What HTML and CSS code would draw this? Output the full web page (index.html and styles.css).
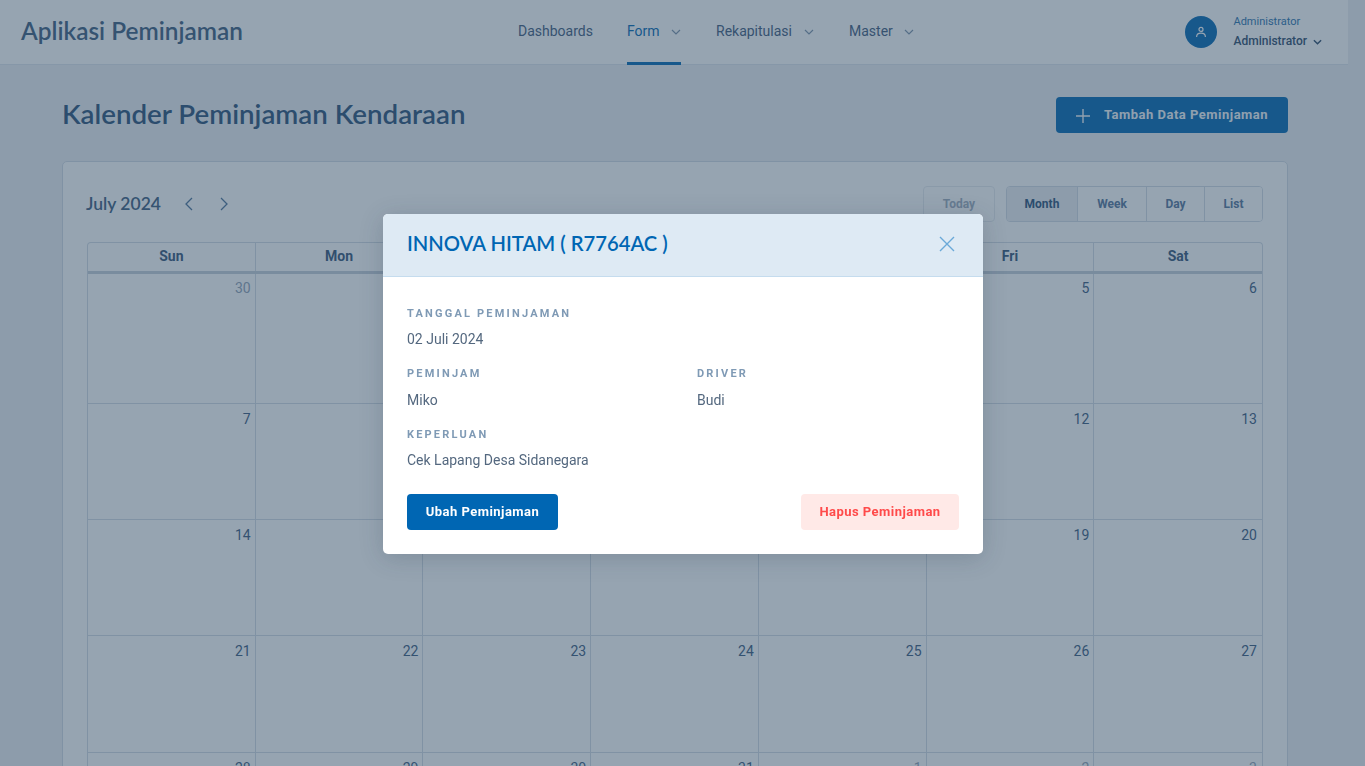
FILE: index.html
```html
<!DOCTYPE html>
<html lang="en">
  <head>
    <meta charset="UTF-8" />
    <meta name="viewport" content="width=device-width, initial-scale=1.0" />
    <title>Kalender Peminjaman Kendaraan</title>
    <link rel="stylesheet" href="styles.css">
  </head>
  <body>
    <div class="page">
      <header class="topbar">
        <div class="brand">Aplikasi Peminjaman</div>
        <nav class="nav">
          <a class="nav-item">Dashboards</a>
          <a class="nav-item active">Form
            <svg class="caret" viewBox="0 0 10 6"><path d="M1 1l4 4 4-4" /></svg>
          </a>
          <a class="nav-item">Rekapitulasi
            <svg class="caret" viewBox="0 0 10 6"><path d="M1 1l4 4 4-4" /></svg>
          </a>
          <a class="nav-item">Master
            <svg class="caret" viewBox="0 0 10 6"><path d="M1 1l4 4 4-4" /></svg>
          </a>
        </nav>
        <div class="user">
          <div class="avatar">
            <svg viewBox="0 0 12 12"><circle cx="6" cy="3.4" r="2" /><path d="M1.6 11c0-2.6 2-3.8 4.4-3.8s4.4 1.2 4.4 3.8" /></svg>
          </div>
          <div class="user-text">
            <div class="user-role">Administrator</div>
            <div class="user-name">Administrator
              <svg class="user-caret" viewBox="0 0 10 6"><path d="M1 1l4 4 4-4" /></svg>
            </div>
          </div>
        </div>
      </header>

      <main class="content">
        <div class="page-head">
          <h1>Kalender Peminjaman Kendaraan</h1>
          <button class="btn-add">
            <svg viewBox="0 0 16 16"><path d="M8 1v14M1 8h14" /></svg>
            <span>Tambah Data Peminjaman</span>
          </button>
        </div>

        <section class="card">
          <div class="toolbar">
            <div class="month-nav">
              <h2>July 2024</h2>
              <svg class="arrow" viewBox="0 0 8 14"><path d="M7 1L1 7l6 6" /></svg>
              <svg class="arrow" viewBox="0 0 8 14"><path d="M1 1l6 6-6 6" /></svg>
            </div>
            <div class="views">
              <button class="btn-today">Today</button>
              <div class="view-group">
                <button class="view active">Month</button>
                <button class="view week">Week</button>
                <button class="view day">Day</button>
                <button class="view list">List</button>
              </div>
            </div>
          </div>

          <div class="calendar">
            <div class="cal-head">
              <div>Sun</div><div>Mon</div><div>Tue</div><div>Wed</div><div>Thu</div><div>Fri</div><div>Sat</div>
            </div>
            <div class="cal-week first">
              <div class="other">30</div><div>1</div><div>2</div><div>3</div><div>4</div><div>5</div><div>6</div>
            </div>
            <div class="cal-week">
              <div>7</div><div>8</div><div>9</div><div>10</div><div>11</div><div>12</div><div>13</div>
            </div>
            <div class="cal-week">
              <div>14</div><div>15</div><div>16</div><div>17</div><div>18</div><div>19</div><div>20</div>
            </div>
            <div class="cal-week">
              <div>21</div><div>22</div><div>23</div><div>24</div><div>25</div><div>26</div><div>27</div>
            </div>
            <div class="cal-week">
              <div>28</div><div>29</div><div>30</div><div>31</div><div class="other">1</div><div class="other">2</div><div class="other">3</div>
            </div>
          </div>
        </section>
      </main>
    </div>

    <div class="overlay">
      <div class="modal">
        <div class="modal-head">
          <h3>INNOVA HITAM ( R7764AC )</h3>
          <svg class="close" viewBox="0 0 16 16"><path d="M1 1l14 14M15 1L1 15" /></svg>
        </div>
        <div class="modal-body">
          <div class="info-grid">
            <div class="info wide">
              <div class="info-label">TANGGAL PEMINJAMAN</div>
              <div class="info-value">02 Juli 2024</div>
            </div>
            <div class="info">
              <div class="info-label">PEMINJAM</div>
              <div class="info-value">Miko</div>
            </div>
            <div class="info">
              <div class="info-label">DRIVER</div>
              <div class="info-value">Budi</div>
            </div>
            <div class="info wide">
              <div class="info-label">KEPERLUAN</div>
              <div class="info-value">Cek Lapang Desa Sidanegara</div>
            </div>
          </div>
          <div class="modal-actions">
            <button class="btn-edit">Ubah Peminjaman</button>
            <button class="btn-delete">Hapus Peminjaman</button>
          </div>
        </div>
      </div>
    </div>
  </body>
</html>
```

FILE: styles.css
```css
* {
  box-sizing: border-box;
}

html,
body {
  height: 100%;
}

body {
  margin: 0;
  height: 766px;
  overflow: hidden;
  background-color: #edeff3;
  font-family: Roboto, "Liberation Sans", sans-serif;
  color: #2c4a6b;
}

button {
  font-family: inherit;
  border: none;
  cursor: pointer;
}

.page {
  width: 1348px;
}

/* top bar */
.topbar {
  height: 65px;
  padding: 0 26px 0 21px;
  display: flex;
  align-items: center;
  justify-content: space-between;
  background-color: #fff;
  border-bottom: 1px solid #dfe5ec;
  position: relative;
}

.brand {
  margin-bottom: 4px;
  font-family: Lato, "Noto Sans", sans-serif;
  font-size: 24.4px;
  font-weight: 600;
  color: #3c5c7e;
}

.nav {
  position: absolute;
  left: 518px;
  top: 0;
  height: 65px;
  display: grid;
  grid-template-columns: 74px 54px 98px 65px;
  column-gap: 35px;
}

.nav-item {
  height: 65px;
  display: flex;
  align-items: center;
  justify-content: space-between;
  padding-bottom: 3px;
  font-size: 14px;
  color: #3f5a7d;
}

.nav-item.active {
  color: #0066b3;
  border-bottom: 3px solid #0066b3;
  padding-bottom: 0;
}

.caret {
  width: 10px;
  height: 6px;
  margin-top: 2px;
  fill: none;
  stroke: #7d93ab;
  stroke-width: 1.2;
}

.user {
  display: flex;
  align-items: center;
  gap: 16px;
}

.avatar {
  width: 32px;
  height: 32px;
  border-radius: 50%;
  background-color: #0066b3;
  display: flex;
  align-items: center;
  justify-content: center;
}

.avatar svg {
  width: 12px;
  height: 12px;
  fill: none;
  stroke: #fff;
  stroke-width: 1.2;
}

.user-text {
  margin-bottom: 2px;
}

.user-role {
  font-size: 11px;
  line-height: 13px;
  color: #2a72ad;
}

.user-name {
  margin-top: 6px;
  font-size: 12px;
  line-height: 14px;
  font-weight: 500;
  color: #2c4a6b;
}

.user-caret {
  width: 9px;
  height: 6px;
  margin-left: 3px;
  fill: none;
  stroke: #2c4a6b;
  stroke-width: 1.6;
}

/* page */
.content {
  padding: 32px 60px 0 62px;
}

.page-head {
  height: 36px;
  margin-bottom: 28px;
  display: flex;
  align-items: center;
  justify-content: space-between;
}

h1 {
  margin: 0 0 4px;
  font-family: Lato, "Noto Sans", sans-serif;
  font-size: 27.7px;
  font-weight: 600;
  color: #2a5078;
}

.btn-add {
  width: 232px;
  height: 36px;
  padding-bottom: 3px;
  display: flex;
  align-items: center;
  justify-content: center;
  gap: 13px;
  background-color: #0066b3;
  border-radius: 4px;
  color: #f2f6fa;
  font-size: 13px;
  font-weight: 700;
  letter-spacing: 0.5px;
}

.btn-add svg {
  width: 16px;
  height: 16px;
  margin: 3px 0 0 -1px;
  fill: none;
  stroke: #f2f6fa;
  stroke-width: 1.4;
}

.card {
  background-color: #fff;
  border: 1px solid #d3dbe4;
  border-radius: 5px;
  padding: 24px 24px 0;
  height: 640px;
}

.toolbar {
  height: 36px;
  margin-bottom: 20px;
  display: flex;
  align-items: center;
  justify-content: space-between;
}

.month-nav {
  margin-left: -1px;
  display: flex;
  align-items: center;
  gap: 27px;
}

.month-nav h2 {
  margin: 0 -3px 2px 0;
  font-family: Lato, "Noto Sans", sans-serif;
  font-size: 17.5px;
  font-weight: 600;
  color: #3c5c7e;
}

.arrow {
  width: 8px;
  height: 14px;
  fill: none;
  stroke: #4c7299;
  stroke-width: 1.3;
}

.views {
  display: flex;
  gap: 11px;
}

.btn-today {
  width: 72px;
  height: 36px;
  background-color: #fff;
  border: 1px solid #e6eaef;
  border-radius: 4px;
  color: #9fadbd;
  font-size: 12px;
  font-weight: 700;
}

.view-group {
  display: flex;
  height: 36px;
  border: 1px solid #d3dbe4;
  border-radius: 4px;
}

.view {
  width: 69px;
  background-color: #fff;
  border-right: 1px solid #d3dbe4;
  color: #54749a;
  font-size: 12px;
  font-weight: 700;
}

.view.active {
  width: 71px;
  background-color: #edeff3;
  color: #2a5078;
  border-radius: 3px 0 0 3px;
}

.view.day {
  width: 58px;
}

.view.list {
  width: 57px;
  border-right: none;
  border-radius: 0 3px 3px 0;
}

/* calendar grid */
.calendar {
  width: 1176px;
  border: 1px solid #d3dbe4;
  border-bottom: none;
  border-radius: 4px 4px 0 0;
}

.cal-head {
  display: grid;
  grid-template-columns: repeat(7, 1fr);
  height: 31px;
  border-bottom: 3px solid #c5ced9;
  font-size: 14px;
  font-weight: 700;
  line-height: 27px;
  text-align: center;
  color: #355578;
}

.cal-head div {
  border-right: 1px solid #d3dbe4;
}

.cal-head div:last-child {
  border-right: none;
}

.cal-week {
  display: grid;
  grid-template-columns: repeat(7, 1fr);
  height: 116.2px;
  border-bottom: 1px solid #d3dbe4;
  font-size: 14px;
  color: #3a5a7e;
}

.cal-week.first {
  height: 130px;
}

.cal-week div {
  padding: 7px 4px 0 0;
  text-align: right;
  border-right: 1px solid #d3dbe4;
}

.cal-week.first div {
  padding-top: 6px;
}

.cal-week div:last-child {
  padding-right: 5px;
  border-right: none;
}

.cal-week .other {
  color: #8fa1b5;
}

/* modal */
.overlay {
  position: fixed;
  inset: 0;
  background-color: rgba(45, 73, 99, 0.5);
}

.modal {
  position: absolute;
  left: 383px;
  top: 214px;
  width: 600px;
  height: 340px;
  background-color: #fff;
  border-radius: 5px;
  overflow: hidden;
  box-shadow: 0 4px 24px rgba(30, 50, 70, 0.2);
}

.modal-head {
  height: 63px;
  padding: 0 28px 2px 24px;
  display: flex;
  align-items: center;
  justify-content: space-between;
  background-color: #deeaf4;
  border-bottom: 1px solid #c5dcee;
}

.modal-head h3 {
  margin: 0 0 3px;
  font-family: Lato, "Noto Sans", sans-serif;
  font-size: 20.2px;
  font-weight: 600;
  color: #0066b3;
}

.close {
  width: 16px;
  height: 16px;
  fill: none;
  stroke: #6aa9d8;
  stroke-width: 1.4;
}

.modal-body {
  padding: 29.5px 24px 24px;
}

.info-grid {
  display: grid;
  grid-template-columns: 290px 1fr;
  row-gap: 19px;
}

.info.wide {
  grid-column: 1 / -1;
}

.info-label {
  font-size: 11px;
  line-height: 13px;
  font-weight: 700;
  letter-spacing: 2.2px;
  color: #7f9ab5;
}

.info-value {
  margin-top: 10.5px;
  font-size: 14px;
  line-height: 18px;
  color: #54687f;
}

.modal-actions {
  margin-top: 25px;
  display: flex;
  justify-content: space-between;
}

.btn-edit,
.btn-delete {
  height: 36px;
  padding-bottom: 3px;
  border-radius: 4px;
  font-size: 13px;
  font-weight: 700;
  letter-spacing: 0.46px;
}

.btn-edit {
  width: 151px;
  background-color: #0066b3;
  color: #fff;
}

.btn-delete {
  width: 158px;
  background-color: #ffe9e7;
  color: #ff4a4a;
}
```
